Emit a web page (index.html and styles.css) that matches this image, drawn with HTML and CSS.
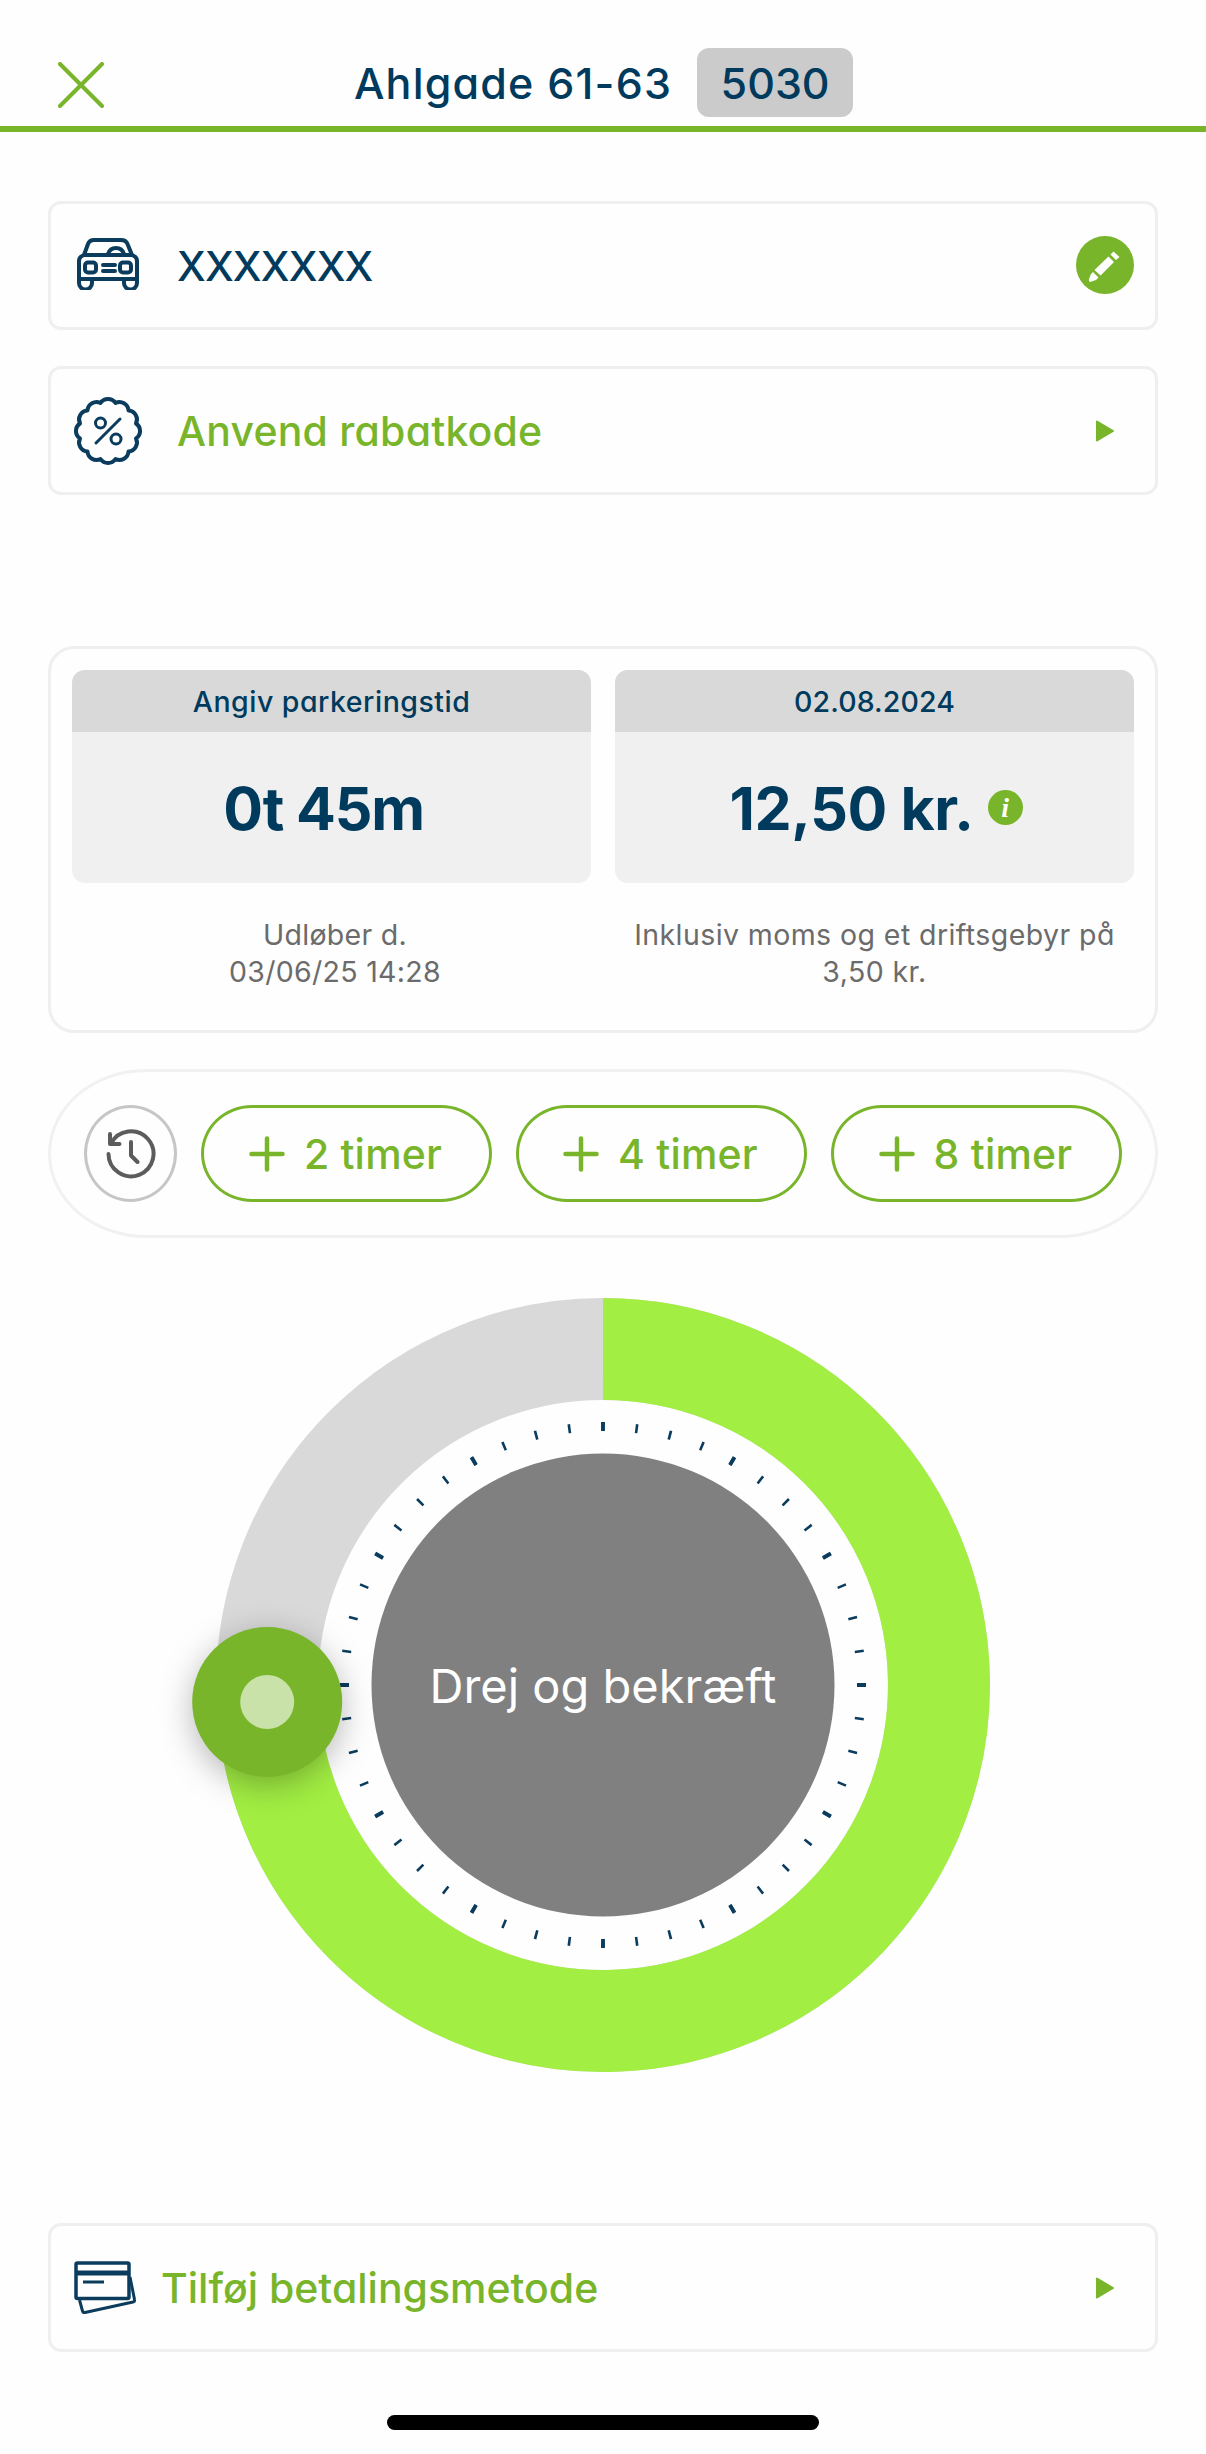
FILE: index.html
```html
<!DOCTYPE html>
<html lang="da">
<head>
<meta charset="utf-8">
<title>Parkering</title>
<link rel="stylesheet" href="styles.css">
</head>
<body>
<header class="topbar">
  <svg class="close" viewBox="0 0 46 46"><path d="M2 2 44 44M44 2 2 44"/></svg>
  <div class="place"><span class="t-title">Ahlgade 61-63</span><span class="zone">5030</span></div>
</header>
<main class="content">
  <section class="card">
    <svg class="icon car" viewBox="0 0 62 52"><path d="M7 17 11 6Q12.500 2 17 2H44Q49 2 50.500 6L55 17M7 17H55Q60 19 60 23V45A6 6 0 0 1 47 45V41M7 17Q2 19 2 23V45A6 6 0 0 0 15 45V41M2 41H60M31 16Q33 10 39 10T47 16M26 27H38M26 33H38"/><rect x="8" y="24.500" width="11" height="10" rx="3"/><rect x="43" y="24.500" width="11" height="10" rx="3"/></svg>
    <span class="label t-plate">XXXXXXX</span>
    <svg class="edit" viewBox="0 0 58 58"><circle cx="29" cy="29" r="29"/><path d="M18.500 34 32.500 20.500 38 26 24.500 39.500ZM34.500 18.500 37.500 15.500 43.500 21 40 24ZM15 38 17 36 22.500 41.500 20 44 14 46Q12.500 45 13 43Z"/></svg>
  </section>
  <section class="card">
    <svg class="icon promo" viewBox="-35 -35 70 70"><path d="M-7.500-28A9 9 0 0 1 7.500-28A9 9 0 0 1 20.500-20.500A9 9 0 0 1 28-7.500A9 9 0 0 1 28 7.500A9 9 0 0 1 20.500 20.500A9 9 0 0 1 7.500 28A9 9 0 0 1-7.500 28A9 9 0 0 1-20.500 20.500A9 9 0 0 1-28 7.500A9 9 0 0 1-28-7.500A9 9 0 0 1-20.500-20.500A9 9 0 0 1-7.500-28Z"/><path class="thin" d="M-12 12 12-12"/><circle class="thin" cx="-7.500" cy="-8" r="5"/><circle class="thin" cx="8" cy="8" r="5"/></svg>
    <span class="label link t-promo">Anvend rabatkode</span>
    <svg class="arrow" viewBox="0 0 18 22"><path d="M1 1.500 17 11 1 20.500Z"/></svg>
  </section>
  <section class="panel">
    <div class="col">
      <div class="box"><div class="box-head t-set">Angiv parkeringstid</div><div class="box-value time">0t 45m</div></div>
      <p class="note expiry">Udløber d.<br>03/06/25 14:28</p>
    </div>
    <div class="col">
      <div class="box"><div class="box-head">02.08.2024</div><div class="box-value price"><span>12,50 kr.</span><span class="info">i</span></div></div>
      <p class="note">Inklusiv moms og et driftsgebyr på<br>3,50 kr.</p>
    </div>
  </section>
  <section class="quick">
    <button class="recent"><svg viewBox="0 0 50 50"><path d="M2.500 25A22.500 22.500 0 1 0 5 14.500M4 5V15H13.500M25 13V26.500L31.500 33"/></svg></button>
    <button class="add"><svg viewBox="0 0 36 36"><path d="M2.500 18H33.500M18 2.500V33.500"/></svg><span>2 timer</span></button>
    <button class="add"><svg viewBox="0 0 36 36"><path d="M2.500 18H33.500M18 2.500V33.500"/></svg><span>4 timer</span></button>
    <button class="add"><svg viewBox="0 0 36 36"><path d="M2.500 18H33.500M18 2.500V33.500"/></svg><span>8 timer</span></button>
  </section>
  <section class="dial">
    <svg viewBox="-387 -387 774 774">
      <circle class="track" r="336"/>
      <path class="arc" d="M0-336A336 336 0 1 1-335.600 17"/>
      <circle class="tick" r="258.500" pathLength="480" stroke-dasharray="0.770 9.230" stroke-dashoffset="0.385"/>
      <circle class="tick" r="258.500" pathLength="480" stroke-dasharray="1.160 38.840" stroke-dashoffset="0.580"/>
      <circle class="knob" cx="-335.800" cy="17" r="75"/>
      <circle class="dot" cx="-335.800" cy="17" r="27"/>
      <circle class="hub" r="231.500"/>
    </svg>
    <span class="confirm">Drej og bekræft</span>
  </section>
  <section class="card pay">
    <svg class="icon cards" viewBox="0 0 64 56"><rect x="3" y="3" width="53" height="35.500" rx="1.500"/><path class="band" d="M3 13H56"/><path class="line" d="M10 22H31"/><path class="line" d="M6.500 40 9.500 51Q10 53 12 52.500L60 42Q62 41.500 61.500 39.500L57 17"/></svg>
    <span class="label link">Tilføj betalingsmetode</span>
    <svg class="arrow" viewBox="0 0 18 22"><path d="M1 1.500 17 11 1 20.500Z"/></svg>
  </section>
</main>
<div class="home"></div>
</body>
</html>
```
FILE: styles.css
```css
* { box-sizing: border-box; }
body { margin: 0; width: 1206px; height: 2454px; background: #fefefe; color: #003a5d; font-family: Inter, "Open Sans", sans-serif; font-weight: 450; font-feature-settings: "cv11"; overflow: hidden; }
svg { display: block; flex: none; fill: none; stroke-linecap: round; stroke-linejoin: round; }
.topbar { display: grid; grid-template-columns: 1fr auto 1fr; height: 132px; padding: 48px 57px 0 58px; border-bottom: 6px solid #79b52a; }
.close { width: 46px; height: 46px; margin-top: 14px; stroke: #79b52a; stroke-width: 4; }
.place { display: flex; height: 69px; align-items: center; gap: 25px; font-size: 43px; white-space: nowrap; }
.t-title { letter-spacing: 1.200px; }
.t-plate { letter-spacing: -.800px; }
.t-promo { letter-spacing: .200px; }
.zone { width: 156px; height: 69px; line-height: 70px; text-align: center; border-radius: 12px; background: #cbcbcb; }
.content { padding: 69px 48px 0; }
.card { display: flex; align-items: center; height: 129px; padding: 0 21px 0 22px; border: 3px solid #efefef; border-radius: 13px; font-size: 41px; }
.card + .card { margin-top: 36px; }
.icon { stroke: #0b3c5d; stroke-width: 4; }
.car { width: 62px; height: 52px; margin: 0 38px 4px 4px; }
.promo { width: 70px; height: 70px; margin-right: 34px; }
.thin { stroke-width: 3; }
.label { flex: 1; padding-top: 1px; }
.link { color: #79b52a; }
.edit { width: 58px; height: 58px; margin-bottom: 1px; fill: #79b52a; }
.edit path { fill: #fff; }
.arrow { width: 18px; height: 22px; margin-right: 20px; fill: #79b52a; stroke: #79b52a; stroke-width: 2; }
.panel { display: flex; gap: 24px; height: 387px; margin-top: 151px; padding: 21px; border: 3px solid #efefef; border-radius: 26px; }
.col { flex: 1; text-align: center; }
.box { height: 213px; border-radius: 13px; background: #f0f0f0; overflow: hidden; }
.box-head { height: 62px; line-height: 64px; background: #d9d9d9; font-size: 28.500px; letter-spacing: .100px; }
.t-set { letter-spacing: .500px; }
.box-value { display: flex; align-items: center; justify-content: center; height: 151px; padding-top: 1px; font-size: 59px; font-weight: 650; letter-spacing: -.400px; }
.time { padding-right: 16px; letter-spacing: -1.200px; }
.price { gap: 14px; padding-left: 3px; }
.info { width: 35px; height: 35px; margin-bottom: 2px; border-radius: 50%; background: #79b52a; color: #fff; font: italic bold 28px/35px "Liberation Serif", serif; letter-spacing: 0; }
.note { margin: 33px 0 0; color: #6b6b6b; font-size: 28.500px; line-height: 37px; font-weight: 400; letter-spacing: .420px; }
.expiry { padding-left: 7px; letter-spacing: .300px; }
.quick { display: flex; gap: 24px; height: 169px; margin-top: 36px; padding: 33px; border: 3px solid #f1f1f1; border-radius: 98px / 84.500px; }
button { padding: 0; background: none; font: inherit; font-feature-settings: inherit; }
.recent { display: flex; align-items: center; justify-content: center; width: 93px; height: 97px; border: 3px solid #c6c6c6; border-radius: 50%; }
.recent svg { width: 50px; height: 50px; stroke: #5c5c5c; stroke-width: 4; }
.add { display: flex; flex: 1; align-items: center; justify-content: center; gap: 19px; height: 97px; padding-right: 2px; border: 3px solid #79b52a; border-radius: 51px / 48.500px; color: #79b52a; font-size: 41px; letter-spacing: .200px; }
.add svg { width: 36px; height: 36px; stroke: #79b52a; stroke-width: 4.500; }
.dial { display: grid; width: 774px; height: 774px; margin: 60px auto 0; place-items: center; }
.dial svg { grid-area: 1 / 1; width: 774px; height: 774px; overflow: visible; stroke-linecap: butt; }
.track { stroke: #d9d9d9; stroke-width: 102; }
.arc { stroke: #a2ee43; stroke-width: 102; }
.tick { stroke: #0b3c5d; stroke-width: 9; }
.knob { fill: #79b52a; filter: drop-shadow(0 8px 16px rgba(0, 0, 0, .28)); }
.dot { fill: #c9e2a9; }
.hub { fill: #808080; }
.confirm { grid-area: 1 / 1; z-index: 1; color: #fff; font-size: 47px; font-weight: 400; }
.pay { margin-top: 151px; }
.cards { width: 64px; height: 56px; margin-right: 24px; }
.cards rect { stroke-width: 3.500; }
.band { stroke-width: 5; stroke-linecap: butt; }
.cards .line { stroke-width: 3; stroke-linecap: butt; }
.home { width: 432px; height: 15px; margin: 63px auto 0; border-radius: 8px; background: #000; }
```
